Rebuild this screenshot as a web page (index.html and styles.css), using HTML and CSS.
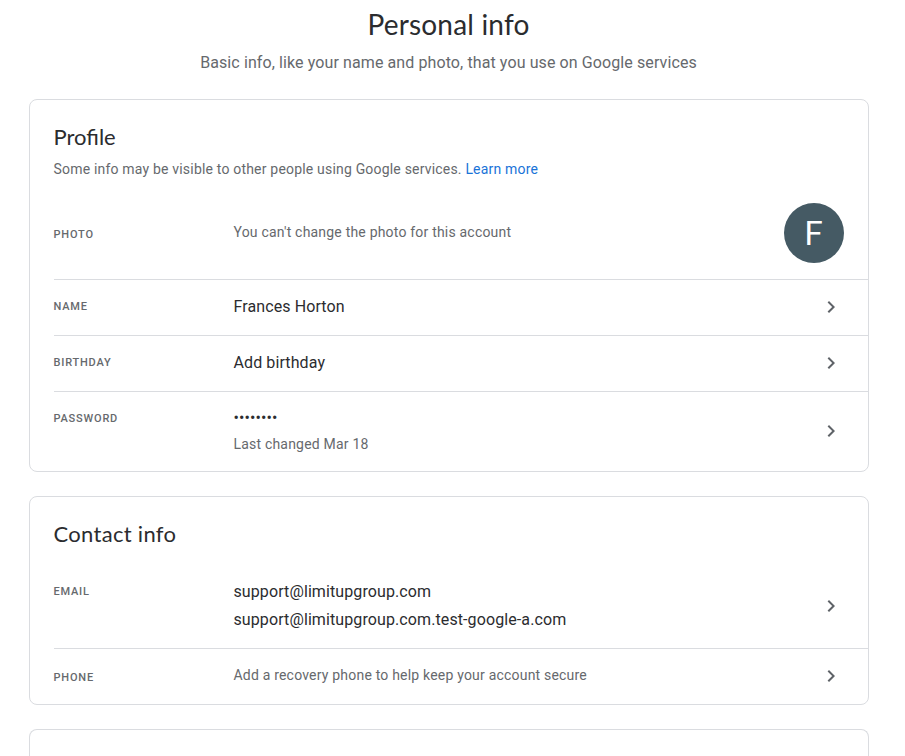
FILE: index.html
```html
<!DOCTYPE html>
<html lang="en">
<head>
<meta charset="utf-8">
<title>Personal info</title>
<link rel="stylesheet" href="styles.css">
</head>
<body>
<main class="page">
  <header class="intro">
    <h1>Personal info</h1>
    <p>Basic info, like your name and photo, that you use on Google services</p>
  </header>

  <section class="card">
    <h2>Profile</h2>
    <p class="note">Some info may be visible to other people using Google services. <a href="#">Learn more</a></p>
    <div class="row photo">
      <span class="label">PHOTO</span>
      <span class="value muted">You can't change the photo for this account</span>
      <span class="avatar">F</span>
    </div>
    <div class="row">
      <span class="label">NAME</span>
      <span class="value">Frances Horton</span>
      <svg class="chevron" viewBox="0 0 24 24"><path d="M8.59 16.59 13.17 12 8.59 7.41 10 6l6 6-6 6z"/></svg>
    </div>
    <div class="row">
      <span class="label">BIRTHDAY</span>
      <span class="value">Add birthday</span>
      <svg class="chevron" viewBox="0 0 24 24"><path d="M8.59 16.59 13.17 12 8.59 7.41 10 6l6 6-6 6z"/></svg>
    </div>
    <div class="row password">
      <span class="label">PASSWORD</span>
      <div class="value"><div class="dots">••••••••</div><div class="changed">Last changed Mar 18</div></div>
      <svg class="chevron" viewBox="0 0 24 24"><path d="M8.59 16.59 13.17 12 8.59 7.41 10 6l6 6-6 6z"/></svg>
    </div>
  </section>

  <section class="card contact">
    <h2>Contact info</h2>
    <div class="row email">
      <span class="label">EMAIL</span>
      <div class="value"><div>support@limitupgroup.com</div><div>support@limitupgroup.com.test-google-a.com</div></div>
      <svg class="chevron" viewBox="0 0 24 24"><path d="M8.59 16.59 13.17 12 8.59 7.41 10 6l6 6-6 6z"/></svg>
    </div>
    <div class="row phone">
      <span class="label">PHONE</span>
      <span class="value muted">Add a recovery phone to help keep your account secure</span>
      <svg class="chevron" viewBox="0 0 24 24"><path d="M8.59 16.59 13.17 12 8.59 7.41 10 6l6 6-6 6z"/></svg>
    </div>
  </section>

  <section class="card next"></section>
</main>
</body>
</html>
```
FILE: styles.css
```css
* { box-sizing: border-box; }
body {
  margin: 0;
  background: #fff;
  color: #2b2c2f;
  font-family: Roboto, "Liberation Sans", sans-serif;
}
.page { width: 840px; margin-left: 29px; }
h1, h2, p { margin: 0; font-weight: 400; }
h1, h2 { font-family: Lato, sans-serif; }
.intro { height: 99px; padding-right: 1px; text-align: center; }
h1 { padding-top: 6px; font-size: 28px; line-height: 36px; letter-spacing: .2px; }
.intro p { padding-top: 9px; font-size: 16px; line-height: 24px; letter-spacing: .1px; color: #66696d; }
.card {
  height: 373px;
  margin-bottom: 24px;
  padding: 23px 0 0 24px;
  border: 1px solid #dadce0;
  border-radius: 8px;
}
h2, .note { margin-left: -.5px; }
h2 { font-size: 22px; line-height: 28px; }
.contact h2 { padding-bottom: 1px; letter-spacing: .3px; }
.note { padding-top: 8px; font-size: 14px; line-height: 20px; letter-spacing: .19px; color: #66696d; }
.note a { color: #1a73d8; text-decoration: none; }
.row {
  display: flex;
  align-items: flex-start;
  height: 56px;
  padding: 15px 24px 0 0;
  border-top: 1px solid #dadce0;
}
.label { width: 180px; flex: none; margin-left: -.5px; font-size: 11px; font-weight: 500; line-height: 24px; letter-spacing: .8px; color: #66696d; }
.value { flex: 1; font-size: 16px; line-height: 24px; letter-spacing: .1px; }
.muted, .changed { color: #66696d; font-size: 14px; letter-spacing: .2px; }
.chevron { width: 24px; height: 24px; flex: none; margin-right: 1px; fill: #5f6368; }
.photo { height: 100px; padding-top: 24px; border-top: 0; }
.photo .label { padding-top: 20px; }
.photo .value { padding-top: 17px; }
.avatar {
  width: 60px; height: 60px;
  padding-right: 1px;
  border-radius: 50%;
  background: #455a64;
  color: #fff;
  font-size: 33px;
  line-height: 61px;
  text-align: center;
}
.password { height: 80px; }
.password .chevron { margin-top: 12px; }
.dots { margin-top: -1px; }
.changed { padding-top: 2px; }
.contact { height: 209px; }
.email { height: 99px; padding-top: 30px; border-top: 0; }
.email .label { padding-top: 1px; }
.email .value { margin-top: -1px; line-height: 28px; }
.email .chevron { margin-top: 15px; }
.phone .label { padding-top: 2px; }
.phone .value { margin-top: -1px; }
.next { height: 27px; margin-bottom: 0; padding: 0; border-bottom: 0; border-radius: 8px 8px 0 0; }
```
